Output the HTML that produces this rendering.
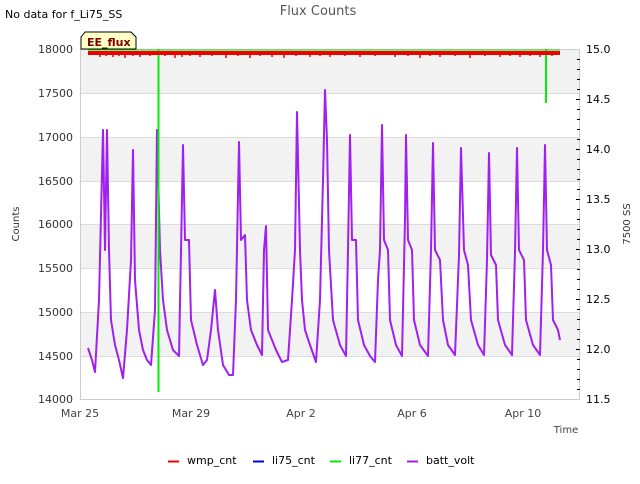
<!DOCTYPE html>
<html><head><meta charset="utf-8"><style>
body{margin:0;background:#fff;width:640px;height:480px;overflow:hidden;font-family:"DejaVu Sans","Liberation Sans",sans-serif;}
</style></head><body>
<svg width="640" height="480" xmlns="http://www.w3.org/2000/svg" font-family="DejaVu Sans, Liberation Sans, sans-serif">
<rect width="640" height="480" fill="#fff"/>
<text x="5" y="18" font-size="11" fill="#000">No data for f_Li75_SS</text>
<text x="318" y="15" font-size="13" fill="#555" text-anchor="middle">Flux Counts</text>
<rect x="80" y="49" width="500" height="44" fill="#f2f2f2"/>
<rect x="80" y="137" width="500" height="44" fill="#f2f2f2"/>
<rect x="80" y="224" width="500" height="44" fill="#f2f2f2"/>
<rect x="80" y="312" width="500" height="44" fill="#f2f2f2"/>
<g stroke="#dcdcdc" stroke-width="1">
<line x1="80" y1="93.5" x2="580" y2="93.5"/><line x1="80" y1="137.5" x2="580" y2="137.5"/>
<line x1="80" y1="181.5" x2="580" y2="181.5"/><line x1="80" y1="224.5" x2="580" y2="224.5"/>
<line x1="80" y1="268.5" x2="580" y2="268.5"/><line x1="80" y1="312.5" x2="580" y2="312.5"/>
<line x1="80" y1="356.5" x2="580" y2="356.5"/>
</g>
<rect x="80.5" y="49.5" width="499" height="350" fill="none" stroke="#ccc"/>
<g font-size="11" fill="#333" text-anchor="end">
<text x="73" y="53">18000</text><text x="73" y="97">17500</text><text x="73" y="141">17000</text>
<text x="73" y="185">16500</text><text x="73" y="228">16000</text><text x="73" y="272">15500</text>
<text x="73" y="316">15000</text><text x="73" y="360">14500</text><text x="73" y="403">14000</text>
</g>
<text transform="translate(19,224) rotate(-90)" font-size="10" fill="#333" text-anchor="middle">Counts</text>
<g font-size="11" fill="#000">
<text x="586" y="53">15.0</text><text x="586" y="103">14.5</text><text x="586" y="153">14.0</text>
<text x="586" y="203">13.5</text><text x="586" y="253">13.0</text><text x="586" y="303">12.5</text>
<text x="586" y="353">12.0</text><text x="586" y="403">11.5</text>
</g>
<g stroke="#000" stroke-width="1">
<path d="M577 59.5h3M577 69.5h3M577 79.5h3M577 89.5h3M576 99.5h4M577 109.5h3M577 119.5h3M577 129.5h3M577 139.5h3M576 149.5h4M577 159.5h3M577 169.5h3M577 179.5h3M577 189.5h3M576 199.5h4M577 209.5h3M577 219.5h3M577 229.5h3M577 239.5h3M576 249.5h4M577 259.5h3M577 269.5h3M577 279.5h3M577 289.5h3M576 299.5h4M577 309.5h3M577 319.5h3M577 329.5h3M577 339.5h3M576 349.5h4M577 359.5h3M577 369.5h3M577 379.5h3M577 389.5h3"/>
</g>
<text transform="translate(630,224) rotate(-90)" font-size="10" fill="#333" text-anchor="middle">7500 SS</text>
<g font-size="11" fill="#444" text-anchor="middle">
<text x="80" y="417">Mar 25</text><text x="191" y="417">Mar 29</text><text x="301" y="417">Apr 2</text>
<text x="412" y="417">Apr 6</text><text x="523" y="417">Apr 10</text>
</g>
<text x="566" y="433" font-size="10" fill="#444" text-anchor="middle">Time</text>
<path fill="none" stroke="#a020f0" stroke-width="2" stroke-linejoin="round" d="M88,348 L92,360 L95,372 L99,300 L101,215 L103,130 L105,250 L107,130 L109,250 L111,320 L115,345 L119,360 L123,378 L127,330 L131,260 L133,150 L135,280 L139,330 L143,350 L147,360 L151,365 L155,310 L157,130 L160,250 L163,300 L167,330 L173,350 L179,356 L183,145 L185,240 L189,240 L191,320 L197,345 L203,365 L207,360 L211,330 L215,290 L218,330 L223,365 L229,375 L233,375 L236,300 L239,142 L241,240 L245,235 L247,300 L251,330 L257,345 L262,355 L264,250 L266,226 L268,330 L272,340 L276,350 L282,362 L288,360 L292,300 L295,250 L297,112 L300,250 L302,300 L305,330 L310,345 L316,362 L320,300 L323,180 L325,90 L327,140 L329,250 L333,320 L340,345 L346,356 L348,250 L350,135 L352,240 L356,240 L358,320 L364,345 L370,356 L375,362 L378,280 L380,250 L382,125 L384,240 L388,250 L390,320 L396,345 L402,356 L405,220 L406,135 L408,240 L412,250 L414,320 L420,345 L428,356 L431,250 L433,143 L435,250 L440,260 L443,320 L448,345 L455,355 L459,255 L461,148 L464,250 L468,265 L471,320 L478,345 L484,355 L487,260 L489,153 L491,255 L496,265 L498,320 L505,345 L512,355 L515,252 L517,148 L519,250 L524,260 L526,320 L533,345 L540,355 L543,250 L545,145 L547,250 L551,265 L553,320 L558,330 L560,340"/>
<line x1="88" y1="50" x2="560" y2="50" stroke="#00ee00" stroke-width="1"/>
<line x1="158.5" y1="49" x2="158.5" y2="392" stroke="#00ee00" stroke-width="2"/>
<line x1="546" y1="49" x2="546" y2="103" stroke="#00ee00" stroke-width="2"/>
<rect x="88" y="51" width="472" height="4" fill="#ee0000"/>
<path stroke="#ee0000" stroke-width="1.5" d="M100 55v2M106 55v1M113 55v2M119 55v1M125 55v3M133 55v1M140 55v2M150 55v1M165 55v1M175 55v3M182 55v2M190 55v1M200 55v2M212 55v1M226 55v3M238 55v1M250 55v3M260 55v1M272 55v2M284 55v3M296 55v1M310 55v2M320 55v1M330 55v2M345 55v1M360 55v2M375 55v1M395 55v2M408 55v1M420 55v3M430 55v1M440 55v2M455 55v1M470 55v3M485 55v1M500 55v2M510 55v1M520 55v2M530 55v1M540 55v2M552 55v1"/>
<path d="M85,32 L131,32 L136,37 L136,49 L81,49 L81,37 Z" fill="#ffffc8" stroke="#000" stroke-width="1"/>
<text x="87" y="46" font-size="11" font-weight="bold" fill="#800000">EE_flux</text>
<g font-size="11" fill="#000">
<line x1="168" y1="461.5" x2="179" y2="461.5" stroke="#ee0000" stroke-width="2"/><text x="187" y="464">wmp_cnt</text>
<line x1="253" y1="461.5" x2="264" y2="461.5" stroke="#0000ee" stroke-width="2"/><text x="272" y="464">li75_cnt</text>
<line x1="330" y1="461.5" x2="341" y2="461.5" stroke="#00ee00" stroke-width="2"/><text x="349" y="464">li77_cnt</text>
<line x1="407" y1="461.5" x2="418" y2="461.5" stroke="#a020f0" stroke-width="2"/><text x="426" y="464">batt_volt</text>
</g>
</svg>
</body></html>
